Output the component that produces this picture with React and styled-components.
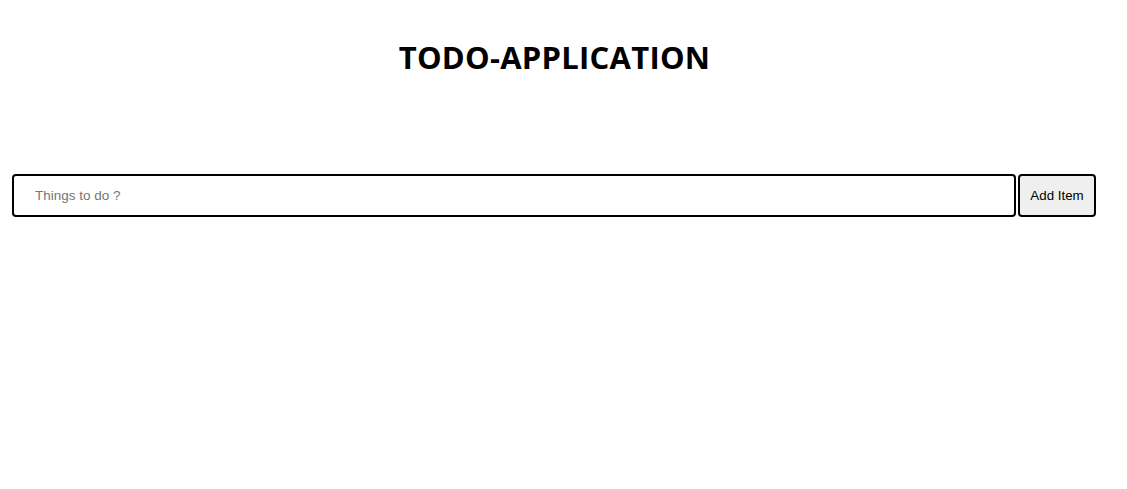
import React, { useState } from 'react';
import styled, { createGlobalStyle } from 'styled-components';

const GlobalStyle = createGlobalStyle`
  body {
    margin: 0;
    background: #fff;
    font-family: "Liberation Sans", Arial, sans-serif;
  }
`;

const Page = styled.div`
  width: 1088px;
  padding: 0 0 0 12px;
  box-sizing: border-box;
`;

const Title = styled.h1`
  margin: 40px 0 0;
  height: 35px;
  line-height: 35px;
  text-align: center;
  font-family: "Open Sans", "Noto Sans", sans-serif;
  font-size: 31px;
  font-weight: 700;
  color: #000;
  letter-spacing: 0.25px;
  padding-left: 9px;
`;

const Form = styled.form`
  display: flex;
  gap: 2px;
  margin-top: 99px;
  width: 1084px;
`;

const Input = styled.input`
  flex: 1;
  height: 43px;
  box-sizing: border-box;
  border: 2px solid #000;
  border-radius: 4px;
  padding: 0 21px;
  font-family: "Liberation Sans", Arial, sans-serif;
  font-size: 13.5px;
  color: #000;
  outline: none;

  &::placeholder {
    color: #757575;
  }
`;

const Button = styled.button`
  width: 78px;
  height: 43px;
  box-sizing: border-box;
  border: 2px solid #000;
  border-radius: 4px;
  background: #efefef;
  font-family: "Liberation Sans", Arial, sans-serif;
  font-size: 13.33px;
  color: #000;
  padding: 0;
  cursor: pointer;
`;

const App = () => {
  const [text, setText] = useState('');
  const [items, setItems] = useState([]);

  const addItem = (e) => {
    e.preventDefault();
    if (!text.trim()) return;
    setItems([...items, text]);
    setText('');
  };

  return (
    <>
      <GlobalStyle />
      <Page>
        <Title>TODO-APPLICATION</Title>
        <Form onSubmit={addItem}>
          <Input
            placeholder="Things to do ?"
            value={text}
            onChange={(e) => setText(e.target.value)}
          />
          <Button type="submit">Add Item</Button>
        </Form>
        {items.map((item, i) => (
          <div key={i}>{item}</div>
        ))}
      </Page>
    </>
  );
};

export default App;
